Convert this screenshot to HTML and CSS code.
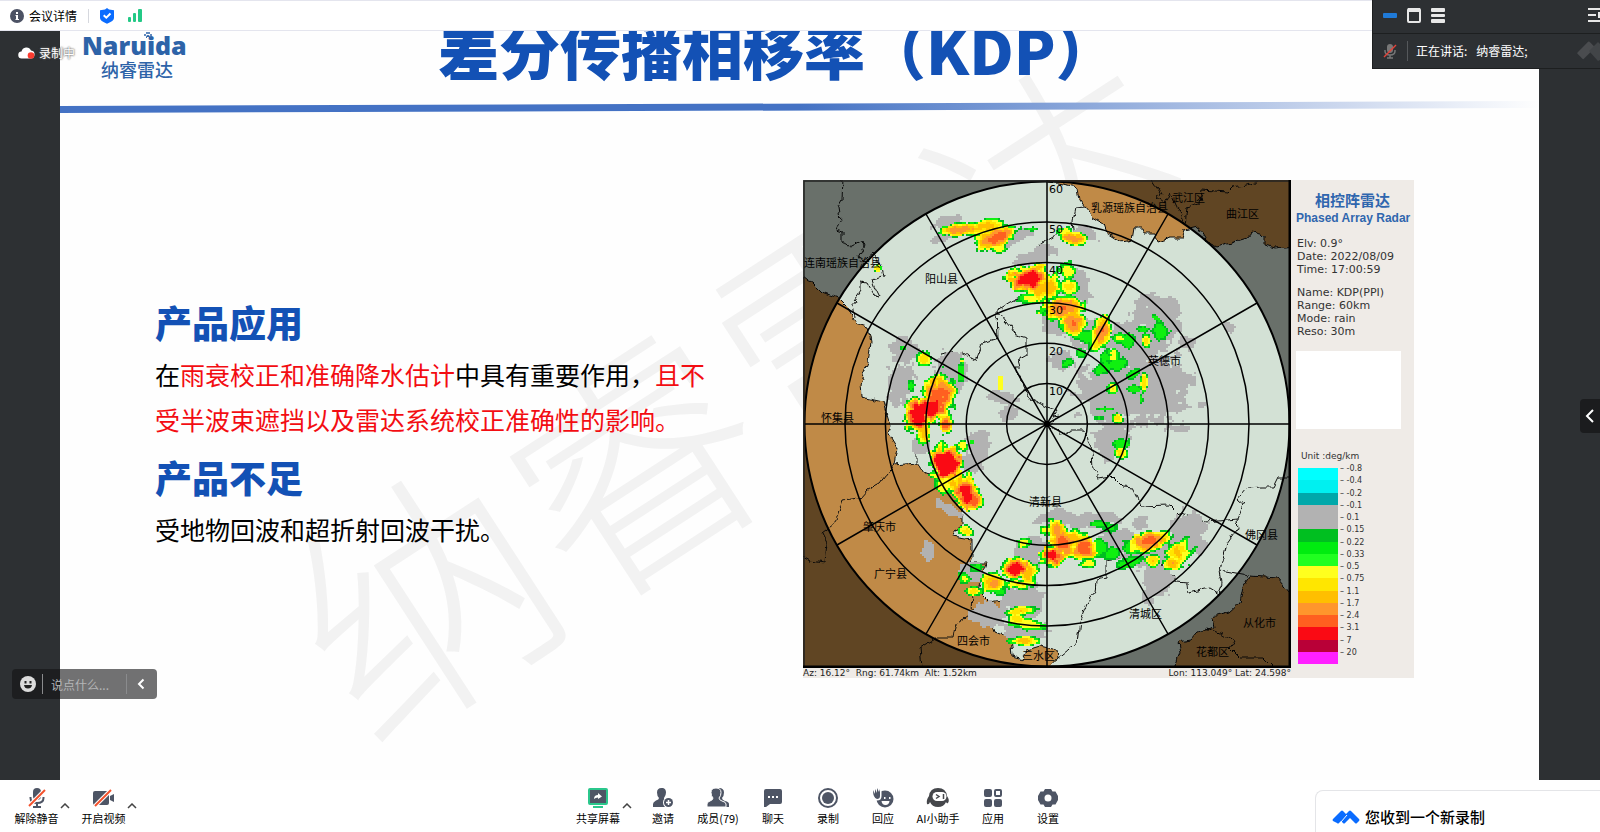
FILE: index.html
```html
<!DOCTYPE html>
<html lang="zh-CN">
<head>
<meta charset="utf-8">
<title>会议详情</title>
<link rel="stylesheet" href="styles.css">
</head>
<body>
<header class="topbar">
  <button class="detail-btn" type="button">
    <svg width="14" height="14" viewBox="0 0 14 14"><circle cx="7" cy="7" r="7" fill="#4c5264"/><path d="M6 3h2v2H6zM5.500 6H8v4h1v1H5.500v-1H6V7h-.5z" fill="#fff"/></svg>
    <span>会议详情</span>
  </button>
  <span class="topbar-sep"></span>
  <svg class="shield" width="14" height="16" viewBox="0 0 14 16"><path d="M7 0l2 1.500 5 .8V10q0 3-7 5.700Q0 13 0 10V2.300l5-.8z" fill="#0a6cff"/><path d="M3.700 7.200l2.600 2.500 4.200-4.200" fill="none" stroke="#fff" stroke-width="2"/></svg>
  <svg width="14" height="13" viewBox="0 0 14 13" fill="#23c986"><rect y="8" width="3" height="5" rx="1"/><rect x="5" y="4" width="3" height="9" rx="1"/><rect x="10" width="4" height="13" rx="1"/></svg>
</header>

<main class="stage">
  <article class="slide">
    <svg class="watermark" viewBox="0 0 1479 749" preserveAspectRatio="xMinYMin slice" aria-hidden="true">
      <text transform="rotate(-33 373 581)" x="245 498 751 1004" y="662">纳睿雷达</text>
    </svg>
    <div class="slide-head">
      <div class="brand">
        <span class="brand-en">Naruida<svg class="paw" width="8" height="6" viewBox="0 0 8 6" fill="#2d63a8"><circle cx="1" cy="3" r="1"/><circle cx="3" cy="1" r="1"/><circle cx="5" cy="1" r="1"/><circle cx="7" cy="3" r="1"/><path d="M2 6q0-3 2-3t2 3H5V5H3v1z"/></svg></span>
        <span class="brand-cn">纳睿雷达</span>
      </div>
      <h1>差分传播相移率（KDP）</h1>
    </div>
    <svg class="rule" viewBox="0 0 1479 14" preserveAspectRatio="none">
      <defs><linearGradient id="fade"><stop offset="0" stop-color="#4472c4"/><stop offset=".5" stop-color="#4472c4"/><stop offset=".85" stop-color="#c6d3ec"/><stop offset="1" stop-color="#fefefe"/></linearGradient></defs>
      <path d="M0 5L1479 0V7L0 12z" fill="url(#fade)"/>
    </svg>
    <div class="slide-body">
      <section class="notes">
        <h2>产品应用</h2>
        <p>在<em>雨衰校正和准确降水估计</em>中具有重要作用，<em>且不受半波束遮挡以及雷达系统校正准确性的影响。</em></p>
        <h2>产品不足</h2>
        <p>受地物回波和超折射回波干扰。</p>
      </section>
      <figure class="radar">
        <svg class="map" viewBox="803 180 488 488">
          <defs>
            <filter id="rough" x="0" y="0" width="1" height="1"><feTurbulence type="fractalNoise" baseFrequency=".12" numOctaves="2" seed="4"/><feDisplacementMap in="SourceGraphic" scale="7" xChannelSelector="R" yChannelSelector="G"/></filter>
          </defs>
          <rect x="803" y="180" width="488" height="488" fill="#d3e1d5"/>
          <g filter="url(#rough)" stroke="#111" stroke-linejoin="round">
            <rect x="790" y="170" width="520" height="510" fill="#d3e1d5" stroke="none"/>
            <g fill="#c08a47">
              <path d="M795 275L812 282 822 292 838 298 848 308 855 323 868 327 871 343 868 363 860 383 861 397 883 402 887 417 890 427 888 432 897 447 894 465 917 463 923 472 938 478 957 478 967 487 968 500 962 510 962 523 953 537 972 540 972 557 970 563 987 563 982 577 978 590 990 602 1003 600 1005 612 992 623 995 632 1010 638 1012 657 1023 660 1027 650 1040 646 1057 650 1058 658 1050 667V680H790z"/>
              <path d="M1047 170V182L1057 183 1078 187 1080 200 1085 207 1093 217 1103 223 1106 232 1122 242 1132 240 1134 228 1143 228 1145 233 1155 233 1158 242 1170 238 1182 238 1185 230 1198 227 1207 242 1217 247 1247 238 1252 232 1265 235 1265 245 1275 248 1310 244V170z"/>
              <path d="M1310 598L1290 593 1277 578 1250 576 1243 587 1240 603 1230 612 1213 617 1215 627 1197 632 1190 640 1178 642 1180 653 1175 665V680H1310z"/>
            </g>
            <g fill="none">
              <path d="M843 178L842 200 838 207 840 220 836 230 842 232 842 242 850 247 863 240 865 245 858 257 862 262 873 253 882 267 884 277 872 280 875 288 880 298 875 297 867 283 862 282 862 290 853 303 855 317"/>
              <path d="M917 463L917 453 918 437 933 417 933 403 940 390 940 377 938 363 940 355 955 352 962 353 975 360 982 343 998 338 997 310 1010 302 1020 298 1032 293 1047 287V278L1035 270 1037 253 1042 242 1057 233 1075 237 1073 222 1076 208 1085 207"/>
              <path d="M998 312L1010 327 1013 333 1027 337 1027 355 1018 360 1020 367 1015 367 1023 383 1027 397 1047 407 1057 410 1053 417 1060 416 1048 426 1057 430 1063 435 1073 430 1085 430 1087 440 1092 450 1093 470 1098 477 1110 475 1122 487 1132 488 1138 500 1140 506 1170 505 1178 513 1207 523 1237 520 1238 527 1227 543 1220 570 1248 575"/>
              <path d="M1237 520L1243 505 1237 500 1247 488 1263 487 1273 487 1278 477 1290 477"/>
              <path d="M1220 570L1222 583 1218 593 1210 588 1188 593 1187 583 1177 582 1173 575 1158 572 1162 563 1168 562 1155 553 1137 555 1105 560 1105 578 1096 580 1095 593 1087 603 1080 620 1077 643 1058 658"/>
              <path d="M894 465L880 483 867 490 860 498 843 500 835 523 822 533 827 543 825 562 810 560 803 556"/>
              <path d="M973 593L972 613 955 625 953 638 937 638 920 648 922 670"/>
              <path d="M1152 180L1162 195 1157 197 1165 203 1170 192 1177 207 1185 225 1187 207 1200 203 1202 190 1228 192 1233 187 1257 183"/>
              <path d="M1207 628L1235 640 1230 648 1240 658 1263 658 1273 668"/>
            </g>
          </g>
          <path d="M803 180H1291V668H803zM1047 181.500a242.500 242.500 0 1 0 .1 0z" fill="#000" fill-opacity=".5" fill-rule="evenodd"/>
          <g id="echoes" shape-rendering="crispEdges"></g>
          <g fill="none" stroke="#000" stroke-width="1.500">
            <circle cx="1047" cy="424" r="40.400"/><circle cx="1047" cy="424" r="80.800"/><circle cx="1047" cy="424" r="121.200"/><circle cx="1047" cy="424" r="161.600"/><circle cx="1047" cy="424" r="202"/><circle cx="1047" cy="424" r="242.500" stroke-width="2"/>
            <path d="M804 424H1290M1047 181V667M837 303L1257 545M837 545L1257 303M926 214L1168 634M1168 214L926 634"/>
            <path d="M804 667V181H1290" stroke="#222"/><path d="M1290 180V667H803" stroke-width="3"/>
          </g>
          <circle cx="1047" cy="424" r="3"/>
          <g class="ranges"><text x="1049" y="193">60</text><text x="1049" y="233">50</text><text x="1049" y="274">40</text><text x="1049" y="314">30</text><text x="1049" y="355">20</text><text x="1049" y="395">10</text></g>
          <g class="places">
            <text x="804" y="267">连南瑶族自治县</text><text x="925" y="283">阳山县</text><text x="1091" y="212">乳源瑶族自治县</text><text x="1172" y="202">武江区</text><text x="1226" y="218">曲江区</text><text x="1148" y="365">英德市</text><text x="821" y="422">怀集县</text><text x="1029" y="506">清新县</text><text x="863" y="531">肇庆市</text><text x="874" y="578">广宁县</text><text x="957" y="645">四会市</text><text x="1022" y="660">三水区</text><text x="1129" y="618">清城区</text><text x="1245" y="539">佛冈县</text><text x="1243" y="627">从化市</text><text x="1196" y="656">花都区</text>
          </g>
        </svg>
        <figcaption class="coords"><span>Az: 16.12°&nbsp; Rng: 61.74km&nbsp; Alt: 1.52km</span><span>Lon: 113.049° Lat: 24.598°</span></figcaption>
        <aside class="legend">
          <div class="legend-cn">相控阵雷达</div>
          <div class="legend-en">Phased Array Radar</div>
          <p>Elv: 0.9°<br>Date: 2022/08/09<br>Time: 17:00:59</p>
          <p>Name: KDP(PPI)<br>Range: 60km<br>Mode: rain<br>Reso: 30m</p>
          <div class="blank"></div>
          <div class="unit">Unit :deg/km</div>
          <ul class="scale">
            <li class="c0"><span>-0.8</span></li><li class="c1"><span>-0.4</span></li><li class="c2"><span>-0.2</span></li><li class="c3"><span>-0.1</span></li><li class="c3"><span>0.1</span></li><li class="c5"><span>0.15</span></li><li class="c6"><span>0.22</span></li><li class="c7"><span>0.33</span></li><li class="c8"><span>0.5</span></li><li class="c9"><span>0.75</span></li><li class="c10"><span>1.1</span></li><li class="c11"><span>1.7</span></li><li class="c12"><span>2.4</span></li><li class="c13"><span>3.1</span></li><li class="c14"><span>7</span></li><li class="c15"><span>20</span></li>
          </ul>
        </aside>
      </figure>
    </div>
  </article>

  <div class="recording">
    <svg width="17" height="14" viewBox="0 0 17 14"><path d="M4 12.500a3.500 3.500 0 0 1-.5-7A5 5 0 0 1 13 4.500a4 4 0 0 1-1 8z" fill="#fff"/><circle cx="13" cy="9.500" r="3.300" fill="#fb3b30"/></svg>
    <span>录制中</span>
  </div>

  <form class="chat">
    <button type="button" aria-label="表情"><svg width="16" height="16" viewBox="0 0 16 16"><circle cx="8" cy="8" r="8" fill="#dcdcdc"/><path d="M4.500 5h2v2.500h-2zM9.500 5h2v2.500h-2zM4 9h8q-.5 3.500-4 3.500T4 9z" fill="#222"/></svg></button>
    <input type="text" aria-label="说点什么" placeholder="说点什么...">
    <button type="button" aria-label="收起"><svg width="8" height="12" viewBox="0 0 8 12"><path d="M6.500 1.500L2 6l4.500 4.500" fill="none" stroke="#fff" stroke-width="2"/></svg></button>
  </form>

  <button class="drawer" type="button" aria-label="展开侧栏"><svg width="10" height="14" viewBox="0 0 10 14"><path d="M8 1L2 7l6 6" fill="none" stroke="#fff" stroke-width="2"/></svg></button>
</main>

<section class="speaker">
  <div class="speaker-tools">
    <button type="button" aria-label="最小化"><svg width="14" height="16" viewBox="0 0 14 16"><rect y="6" width="14" height="5" rx="1" fill="#1f7ad8"/></svg></button>
    <button type="button" aria-label="单窗口"><svg width="14" height="16" viewBox="0 0 14 16"><rect x="1" y="2" width="12" height="13" rx="1" fill="none" stroke="#e8e8e8" stroke-width="2"/><path d="M1 1h12v4H1z" fill="#e8e8e8"/></svg></button>
    <button type="button" aria-label="列表"><svg width="14" height="16" viewBox="0 0 14 16" fill="#e8e8e8"><rect y="1" width="14" height="4" rx="1"/><rect y="7" width="14" height="3" rx="1"/><rect y="12" width="14" height="4" rx="1"/></svg></button>
    <button class="speaker-layout" type="button" aria-label="布局"><svg width="12" height="16" viewBox="0 0 12 16" fill="none" stroke="#e8e8e8" stroke-width="2"><path d="M0 2h12M0 8h8M0 14h12M11 5v6"/></svg></button>
  </div>
  <div class="speaker-row">
    <svg width="14" height="16" viewBox="0 0 14 16"><rect x="4" y="1" width="6" height="9" rx="3" fill="#777"/><path d="M2 7v1q0 4 5 4t5-4V7M7 12v3M4 15h6" fill="none" stroke="#777" stroke-width="1.500"/><path d="M1 14L13 2" stroke="#e2433a" stroke-width="1.500"/></svg>
    <span class="speaker-sep"></span>
    <span>正在讲话:</span><span class="speaker-name">纳睿雷达;</span>
    <svg class="speaker-logo" width="25" height="22" viewBox="0 0 25 22" fill="#4a4c4f"><rect x="3" y="6" width="17" height="9" rx="1" transform="rotate(-45 11 11)"/><path d="M14 11l9-9 2 2v16l-2 1z" fill="#424548"/></svg>
  </div>
</section>

<footer class="toolbar">
  <div class="tools-left">
    <button class="tool" type="button"><svg width="20" height="20" viewBox="0 0 20 20"><rect x="6" y="0" width="8" height="12" rx="4" fill="#4e5565"/><path d="M3.500 9v1q0 5 6.500 5t6.500-5V9M10 15v4M6 19h8" fill="none" stroke="#4e5565" stroke-width="2"/><path d="M2 18L18 2" stroke="#fff" stroke-width="4"/><path d="M2 18L18 2" stroke="#f4512c" stroke-width="2"/></svg><span>解除静音</span></button>
    <button class="caret" type="button" aria-label="音频选项"><svg width="10" height="6" viewBox="0 0 10 6"><path d="M1 5l4-4 4 4" fill="none" stroke="#444" stroke-width="1.500"/></svg></button>
    <button class="tool" type="button"><svg width="22" height="20" viewBox="0 0 22 20"><rect y="3" width="16" height="14" rx="2" fill="#4e5565"/><path d="M17 8l4-2v8l-4-2z" fill="#4e5565"/><path d="M2 18L18 2" stroke="#fff" stroke-width="4"/><path d="M2 18L18 2" stroke="#f4512c" stroke-width="2"/></svg><span>开启视频</span></button>
    <button class="caret" type="button" aria-label="视频选项"><svg width="10" height="6" viewBox="0 0 10 6"><path d="M1 5l4-4 4 4" fill="none" stroke="#444" stroke-width="1.500"/></svg></button>
  </div>
  <nav class="tools-main">
    <button class="tool" type="button"><svg width="20" height="20" viewBox="0 0 20 20"><rect x="1" y="1" width="18" height="15" rx="1" fill="#4e5565" stroke="#2bc78c" stroke-width="2"/><path d="M5 18h10v2H5z" fill="#2bc78c"/><path d="M6 11q0-4 4-4V5l4 3.500L10 11V9.500Q7.500 9.500 6 11z" fill="#fff"/></svg><span>共享屏幕</span></button>
    <button class="caret" type="button" aria-label="共享选项"><svg width="10" height="6" viewBox="0 0 10 6"><path d="M1 5l4-4 4 4" fill="none" stroke="#444" stroke-width="1.500"/></svg></button>
    <button class="tool" type="button"><svg width="20" height="20" viewBox="0 0 20 20" fill="#4e5565"><path d="M8.500 0C12 0 13 2 13 4.500q0 3-2 5.500v1h0q0 3 3 8H0v-3q0-2 3-3.500 3-1 3-2.500Q4 8 4 4.500 4 0 8.500 0z"/><circle cx="15.500" cy="14.500" r="5.500" fill="#fff"/><circle cx="15.500" cy="14.500" r="4.500"/><path d="M13 14.500h5M15.500 12v5" stroke="#fff" stroke-width="1.500"/></svg><span>邀请</span></button>
    <button class="tool" type="button"><svg width="22" height="20" viewBox="0 0 22 20" fill="#4e5565"><path d="M12 0q5 0 5 4.500Q17 8 15 10q0 2 3 3 4 1 4 3v3H10z"/><path d="M9 0q5 0 5 4.500Q14 8 12 10q0 2 3 3 4 1 4 3v3H0v-3q0-2 3-3 3-1 3-3-2-2-2-5.500Q4 0 9 0z" stroke="#fff"/></svg><span>成员(79)</span></button>
    <button class="tool" type="button"><svg width="20" height="20" viewBox="0 0 20 20"><path d="M3 1h14q2 0 2 2v11q0 2-2 2H7l-4 3H1V3q0-2 2-2z" fill="#4e5565"/><path d="M5 8h2v2H5zM9 8h2v2H9zM13 8h2v2h-2z" fill="#fff"/></svg><span>聊天</span></button>
    <button class="tool" type="button"><svg width="20" height="20" viewBox="0 0 20 20"><circle cx="10" cy="10" r="9" fill="none" stroke="#4e5565" stroke-width="2"/><circle cx="10" cy="10" r="6" fill="#4e5565"/></svg><span>录制</span></button>
    <button class="tool" type="button"><svg width="22" height="20" viewBox="0 0 22 20" fill="#4e5565"><circle cx="13" cy="11" r="8.500"/><path d="M12 9h1.500v2H12zM17 9h1.500v2H17zM9.500 13h8q-.5 4-4 4t-4-4z" fill="#fff"/><path d="M1 2l2 4V1l2 4V0l2 4 1-3v7q0 3-3 3-4-1-4-9z" stroke="#fff" stroke-width="3"/><path d="M1 2l2 4V1l2 4V0l2 4 1-3v7q0 3-3 3-4-1-4-9z"/></svg><span>回应</span></button>
    <button class="tool" type="button"><svg width="24" height="20" viewBox="0 0 24 20" fill="#45474b"><path d="M12 0q8 0 9 8 3 4 1 7-1 1-2-1-2 5-8 5t-8-5q-1 3-3 2-1-4 2-8Q4 0 12 0z"/><rect x="6.500" y="4" width="14" height="9" rx="4.500" fill="#fff"/><path d="M10 6.500l3 2-3 2M17.500 6v5" fill="none" stroke="#45474b" stroke-width="1.500"/></svg><span>AI小助手</span></button>
    <button class="tool" type="button"><svg width="20" height="20" viewBox="0 0 20 20" fill="#4e5565"><rect x="1" y="1" width="8" height="8" rx="2"/><rect x="12" y="2" width="6" height="6" rx="1" fill="none" stroke="#4e5565" stroke-width="2"/><rect x="1" y="11" width="8" height="8" rx="2"/><rect x="11" y="11" width="8" height="8" rx="2"/></svg><span>应用</span></button>
    <button class="tool" type="button"><svg width="20" height="20" viewBox="0 0 20 20"><path d="M7 1h6l1.500 2.500h3L20 8v4l-2.500 4.500h-3L13 19H7l-1.500-2.500h-3L0 12V8l2.500-4.500h3z" fill="#4e5565"/><circle cx="10" cy="10" r="3.500" fill="#fff"/></svg><span>设置</span></button>
  </nav>
  <div class="toast" role="status">
    <svg width="28" height="14" viewBox="0 0 28 14" fill="#0a6cff"><path d="M1 9L9 1q1-1 2 0l3 3 3-3q1-1 2 0l8 8q1 1 0 2l-2 2q-1 1-2 0l-5-5-5 5q-1 1-2 0l-2-2-2 2q-1 1-2 0L1 11q-1-1 0-2z"/><path d="M9 12l6-7" stroke="#fff"/></svg>
    <span>您收到一个新录制</span>
  </div>
</footer>
<script src="radar.js"></script>
</body>
</html>
```
FILE: styles.css
```css
* { box-sizing: border-box; }
body {
  margin: 0;
  min-height: 100vh;
  display: flex;
  flex-direction: column;
  position: relative;
  overflow: hidden;
  background: #fff;
  color: #000;
  font: 12px/16px "Noto Sans CJK SC", sans-serif;
}
button { border: 0; padding: 0; background: none; color: inherit; font: inherit; display: flex; align-items: center; }
svg { display: block; flex: none; }
h1, h2, p, ul, figure { margin: 0; padding: 0; font-weight: inherit; }

.topbar { height: 31px; flex: none; display: flex; align-items: center; padding-left: 10px; border-top: 1px solid #e4e5ee; border-bottom: 1px solid #e4e5ee; }
.detail-btn { gap: 5px; }
.topbar-sep { width: 1px; height: 14px; margin: 0 11px; background: #d6d8de; }
.shield { margin-right: 14px; }

.stage { flex: 1; position: relative; display: flex; padding: 0 61px 0 60px; background: #2d3033; }
.slide { flex: 1; min-width: 0; position: relative; overflow: hidden; background: #fefefe; }
.watermark { position: absolute; inset: 0; width: 100%; height: 100%; }
.watermark text { font-size: 250px; font-weight: 300; fill: #f2f2f2; }
.slide-head { position: relative; height: 70px; display: flex; }
.brand { width: 378px; padding-left: 22px; color: #2d63a8; }
.brand-en { position: relative; display: block; width: 106px; font: 800 25px/28px "Open Sans", sans-serif; }
.paw { position: absolute; left: 62px; top: 1px; }
.brand-cn { display: block; padding-left: 19px; font-size: 18px; line-height: 20px; font-weight: 500; }
h1 { font-size: 61px; line-height: 62px; font-weight: 900; color: #1351b5; margin-top: -13px; white-space: nowrap; }
.rule { position: relative; width: 100%; height: 14px; }

.slide-body { position: relative; display: flex; align-items: flex-start; justify-content: space-between; padding: 65px 125px 0 95px; }
.notes { width: 546px; padding-top: 114px; }
.notes h2 { font-size: 37px; line-height: 56px; font-weight: 900; color: #1351b5; }
.notes p { font-size: 25px; line-height: 45px; padding: 2px 0 7px; margin-right: -20px; }
.notes em { font-style: normal; color: #f30d12; }

.radar { display: grid; grid-template-columns: 488px 123px; background: #efebe7; font-family: "DejaVu Sans", sans-serif; color: #333; }
.map { width: 488px; height: 488px; }
.coords { grid-row: 2; display: flex; justify-content: space-between; font-size: 9px; line-height: 10px; color: #222; }
.ranges { font: 11px "DejaVu Sans", sans-serif; }
.places { font: 11px "Noto Sans CJK SC", sans-serif; }
.legend { grid-row: 1 / 3; grid-column: 2; padding: 10px 5px 0; font-size: 11px; line-height: 13px; }
.legend-cn { text-align: center; font: 700 15px/20px "Noto Sans CJK SC", sans-serif; color: #2f66ae; }
.legend-en { font: 700 12px/16px "Liberation Sans", sans-serif; color: #2f66ae; white-space: nowrap; margin-bottom: 11px; }
.legend p { margin: 0 0 10px 1px; }
.blank { width: 105px; height: 78px; margin-top: 13px; background: #fff; }
.unit { margin: 20px 0 5px 5px; font-size: 9px; line-height: 14px; }
.scale { list-style: none; height: 196px; margin-left: 2px; display: grid; grid-auto-rows: 1fr; }
.scale li { width: 40px; }
.scale span { display: block; margin-left: 42px; white-space: nowrap; font-size: 8px; line-height: 2px; }
.scale span::before { content: "– "; }
.c0 { background: #00ffff; }
.c1 { background: #00f0f0; }
.c2 { background: #00a8aa; }
.c3 { background: #b2b2b2; }
.c5 { background: #00bf20; }
.c6 { background: #00ec10; }
.c7 { background: #20ff20; }
.c8 { background: #ffff1e; }
.c9 { background: #ffe600; }
.c10 { background: #ffbf00; }
.c11 { background: #ff962c; }
.c12 { background: #ff5f20; }
.c13 { background: #fa0a14; }
.c14 { background: #b90037; }
.c15 { background: #ff20ff; }

.recording { position: absolute; left: 18px; top: 14px; display: flex; align-items: center; gap: 4px; color: #fff; text-shadow: 0 0 2px #666, 0 0 2px #666; }
.chat { position: absolute; left: 12px; bottom: 81px; width: 145px; height: 30px; display: flex; align-items: center; padding: 0 12px 0 8px; border-radius: 4px; background: rgba(18, 19, 20, .6); }
.chat input { width: 85px; height: 20px; margin: 0 10px 0 6px; padding: 0 8px; border: solid #8a8b8d; border-width: 0 1px; border-radius: 0; background: none; color: #fff; font: inherit; }
.chat input::placeholder { color: #b4b5b6; opacity: 1; }
.drawer { position: absolute; right: 0; top: 368px; width: 20px; height: 34px; justify-content: center; border-radius: 4px 0 0 4px; background: #1b1c1e; }

.speaker { position: absolute; right: 0; top: 0; width: 228px; border: solid #1d1f20; border-width: 0 0 1px 1px; background: #2d3033; color: #fff; }
.speaker-tools { height: 34px; display: flex; align-items: center; gap: 10px; padding: 0 0 4px 10px; border-bottom: 1px solid #1d1f20; }
.speaker-layout { margin-left: auto; }
.speaker-row { height: 34px; display: flex; align-items: center; padding-left: 10px; }
.speaker-sep { width: 1px; height: 20px; margin: 0 8px 0 10px; background: #55585b; }
.speaker-name { margin-left: 9px; }
.speaker-logo { margin-left: auto; }

.toolbar { position: relative; height: 52px; flex: none; display: grid; grid-template-columns: 1fr auto 1fr; background: #fff; font-size: 11px; }
.tools-left, .tools-main { display: flex; align-items: center; }
.tools-left { padding-left: 9px; }
.tools-main { margin-left: 46px; }
.tool { width: 55px; flex-direction: column; gap: 2px; padding-top: 2px; white-space: nowrap; }
.tool span { line-height: 16px; }
.caret { width: 10px; margin: 0 4px 0 -4px; }
.tools-left .caret { width: 12px; }
.toast { position: absolute; right: 0; bottom: 0; width: 285px; height: 42px; display: flex; align-items: center; gap: 5px; padding: 10px 0 0 16px; border: solid #e4e5e8; border-width: 1px 0 0 1px; border-radius: 8px 0 0 0; background: #fff; font-size: 15px; font-weight: 500; }
```
FILE: radar.js
```js
// Palette, weakest to strongest. Index 1 is the neutral band.
const COLORS = [null, '#b2b2b2', '#00bf20', '#10f010', '#ffff1e', '#ffe600', '#ffbf00', '#ff962c', '#ff5f20', '#fa0a14'];

// Neutral patches: x, y, rx, ry, angle
const NEUTRAL = [
  [947,220,15,5,-15],[943,236,12,4,-20],[1013,238,20,6,-30],[1085,233,12,7,10],[1030,258,18,6,-10],[1045,250,10,6,0],[1073,290,15,22,0],
  [1057,323,18,12,20],[1090,332,24,16,0],[1133,345,32,26,0],[1157,317,22,24,-20],[1148,385,38,38,0],[1120,390,46,34,0],[1060,360,13,10,0],
  [1180,380,13,9,0],[1180,406,12,4,0],[1228,326,6,6,0],[1185,340,8,6,0],[1110,440,19,18,0],[1180,428,9,4,0],[1200,404,4,4,0],
  [903,350,16,13,20],[900,383,13,22,0],[950,372,18,22,0],[1003,397,15,7,10],[1007,412,9,8,0],[977,443,12,15,0],[970,462,11,12,0],
  [950,510,12,5,25],[938,502,4,6,0],[927,550,6,10,0],[1030,550,18,13,0],[1057,517,22,9,0],[1083,520,24,8,-5],[1022,600,22,18,0],
  [987,613,18,13,0],[970,572,13,10,20],[1023,630,19,12,0],[1183,533,22,19,-40],[1140,523,8,7,0],[1157,577,15,18,0],[1103,517,20,6,0],
  [1117,540,20,12,0],[1150,553,34,14,0],[1193,543,12,12,0],[1147,597,6,8,0],[920,445,10,8,0]
];

// Echo cells: x, y, rx, ry, angle, peak
const CELLS = [
  [958,229,18,7,-5,8],[987,225,20,7,-12,6.5],[995,236,25,11,-20,8.5],[998,247,9,5,0,5],[1030,228,7,2,0,3.5],[1073,238,15,7,12,8],[1063,231,8,5,0,5],
  [1028,278,25,14,-10,10],[1042,287,21,15,0,7],[1030,297,14,6,0,5],[1067,270,8,9,0,5],[1067,286,10,10,0,5.5],[1062,307,23,13,-5,8],[1072,322,14,15,-20,8],
  [1082,335,13,7,20,3.9],[1101,330,11,17,15,8],[1095,342,8,10,0,5.5],[1145,340,5,8,0,5.5],[1160,330,8,9,0,3.9],[1155,317,6,2,40,3.5],[1142,328,6,3,0,3.9],
  [1127,340,7,8,0,3.9],[1112,353,7,8,0,5],[1117,363,10,7,0,3.9],[1102,367,11,6,-20,3.9],[1132,373,8,5,-30,3.9],[1143,381,5,10,0,6],[1133,388,7,4,0,3.9],
  [1140,398,2,4,0,3.5],[1112,388,6,6,0,5],[1117,417,6,5,0,5.5],[1105,408,9,2,0,3.5],[1097,417,7,1.5,0,3.5],[1120,443,9,6,0,3.9],[1120,452,7,6,0,5.5],
  [1067,362,7,4,-20,3.5],[1080,353,6,5,0,3.5],[1118,337,7,5,0,4.5],[1104,356,6,6,0,3.9],
  [923,358,8,8,0,5.5],[902,347,3,3,0,3.9],[960,372,4,10,0,3.9],[961,360,2,3,0,5],[910,385,4,6,0,3.5],[937,397,18,26,15,8.8],[917,413,15,19,0,11.5],
  [930,408,17,16,-20,10],[923,430,8,14,0,7],[945,423,8,11,0,8.5],[945,462,17,20,-35,11.5],[962,445,6,6,0,5],[971,441,3,3,0,3.5],
  [965,492,13,20,-30,10],[973,501,10,10,0,9],[943,485,10,10,0,5],[953,483,10,9,0,6.5],[968,478,5,8,0,5.5],[965,530,9,5,10,5.5],
  [1055,528,10,12,0,7.5],[1045,529,8,5,0,5],[1063,543,16,16,0,8.8],[1052,555,15,11,-10,10],[1082,548,15,14,-20,8.8],[1087,562,9,6,0,5],[1072,537,17,8,5,6.5],
  [1098,547,9,9,0,3.9],[1097,523,9,3,0,3.5],[1110,527,7,5,0,3.5],[1112,552,7,6,0,3.9],[1023,542,7,5,0,5],[1015,567,15,11,-10,10],[1027,573,9,13,0,6.5],
  [1017,583,13,5,0,5.5],[992,582,13,10,20,7.5],[998,590,7,6,0,3.9],[963,577,8,5,30,4.5],[973,590,9,5,0,5.5],[975,567,7,4,0,3.5],[1020,610,16,5,-8,6],
  [1015,618,9,9,0,5.5],[1028,624,16,6,10,5],[1022,640,16,5,0,6.5],[1148,540,20,11,-10,8.5],[1162,535,12,7,-10,5.5],[1132,547,10,7,0,4.5],
  [1127,562,15,6,-20,3.9],[1110,553,7,6,0,3.5],[1177,553,11,12,-50,6.5],[1172,562,11,9,0,7],[1152,560,8,6,0,6],[1192,550,7,2,-50,3.5],[1181,546,5,11,30,5],[877,267,4,4,0,5.5]
];

const CELL = 2;

function hash(x, y) {
  const s = Math.sin(x * 127.1 + y * 311.7) * 43758.5453;
  return s - Math.floor(s);
}

function noise(x, y) {
  const ix = Math.floor(x), iy = Math.floor(y), fx = x - ix, fy = y - iy;
  const top = hash(ix, iy) * (1 - fx) + hash(ix + 1, iy) * fx;
  const low = hash(ix, iy + 1) * (1 - fx) + hash(ix + 1, iy + 1) * fx;
  return top * (1 - fy) + low * fy - 0.5;
}

function distance(x, y, b) {
  const a = b[4] * Math.PI / 180, dx = x - b[0], dy = y - b[1];
  return Math.hypot((dx * Math.cos(a) + dy * Math.sin(a)) / b[2], (dy * Math.cos(a) - dx * Math.sin(a)) / b[3]);
}

const paths = COLORS.map(() => '');
for (let y = 200; y < 660; y += CELL) {
  for (let x = 860; x < 1240; x += CELL) {
    const n = noise(x / 6, y / 6) * 0.5 + noise(x / 3, y / 3) * 0.35;
    let level = 0;
    for (const b of NEUTRAL) if (distance(x, y, b) + n * 1.2 < 1) level = 1;
    for (const b of CELLS) {
      const d = Math.max(0, distance(x, y, b) + n * 0.85);
      if (d < 1) level = Math.max(level, 2 + (b[5] - 2) * (1 - Math.pow(d, 2.4)));
    }
    const index = Math.min(9, Math.floor(level));
    if (index) paths[index] += `M${x} ${y}h${CELL}v${CELL}h-${CELL}z`;
  }
}
paths[4] += 'M998 376h5v14h-5z';
document.getElementById('echoes').innerHTML =
  paths.map((d, i) => d && `<path fill="${COLORS[i]}" d="${d}"/>`).join('');
```
